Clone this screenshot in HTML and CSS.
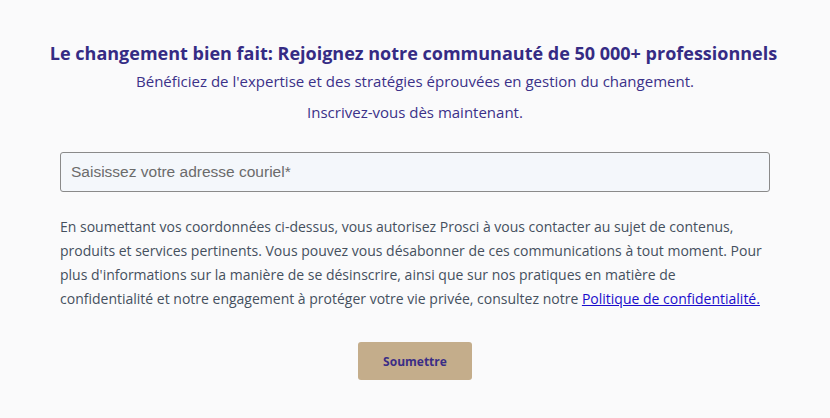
FILE: index.html
```html
<!DOCTYPE html>
<html lang="fr">
<head>
<meta charset="utf-8">
<link rel="stylesheet" href="styles.css">
</head>
<body>
<main class="wrap">
  <h1 class="title">Le changement bien fait: Rejoignez notre communauté de 50 000+ professionnels</h1>
  <p class="sub">Bénéficiez de l'expertise et des stratégies éprouvées en gestion du changement.</p>
  <p class="sub sub2">Inscrivez-vous dès maintenant.</p>
  <form class="form">
    <input class="email" type="email" placeholder="Saisissez votre adresse couriel*">
    <p class="legal">En soumettant vos coordonnées ci-dessus, vous autorisez Prosci à vous contacter au sujet de contenus, produits et services pertinents. Vous pouvez vous désabonner de ces communications à tout moment. Pour plus d'informations sur la manière de se désinscrire, ainsi que sur nos pratiques en matière de confidentialité et notre engagement à protéger votre vie privée, consultez notre <a href="#">Politique de confidentialité.</a></p>
    <div class="actions"><button type="button" class="btn">Soumettre</button></div>
  </form>
</main>
</body>
</html>
```
FILE: styles.css
```css
html, body { margin: 0; padding: 0; }
body {
  background: #fafafb;
  font-family: "Open Sans", sans-serif;
  width: 830px;
  height: 418px;
  overflow: hidden;
}
.wrap {
  width: 710px;
  margin: 0 auto;
  padding-top: 40px;
  display: flex;
  flex-direction: column;
  align-items: center;
}
.title {
  margin: 0 0 0 -3px;
  font-size: 18px;
  font-weight: 700;
  color: #352b84;
  line-height: 26px;
  white-space: nowrap;
  text-align: center;
}
.sub {
  margin: 4px 0 0;
  font-size: 15px;
  line-height: 22px;
  color: #3b3189;
  text-align: center;
}
.sub2 { margin-top: 9px; }
.form {
  width: 710px;
  margin-top: 29px;
  display: flex;
  flex-direction: column;
}
.email {
  box-sizing: border-box;
  width: 710px;
  height: 40px;
  border: 1px solid #8a8a8a;
  border-radius: 3px;
  background: #f4f7fb;
  padding: 0 10px;
  font-family: "Liberation Sans", Arial, sans-serif;
  font-size: 15.5px;
  color: #333;
}
.email::placeholder { color: #6b6b6b; }
.legal {
  margin: 23px 0 0;
  font-size: 14px;
  line-height: 24px;
  color: #45505e;
}
.legal a { color: #1a0dcc; text-decoration: underline; }
.actions {
  display: flex;
  justify-content: center;
  margin-top: 31px;
}
.btn {
  width: 114px;
  height: 38px;
  border: none;
  border-radius: 3px;
  background: #c4ad8b;
  color: #3b2d86;
  font-family: "Open Sans", sans-serif;
  font-weight: 700;
  font-size: 12px;
  cursor: pointer;
}
```
